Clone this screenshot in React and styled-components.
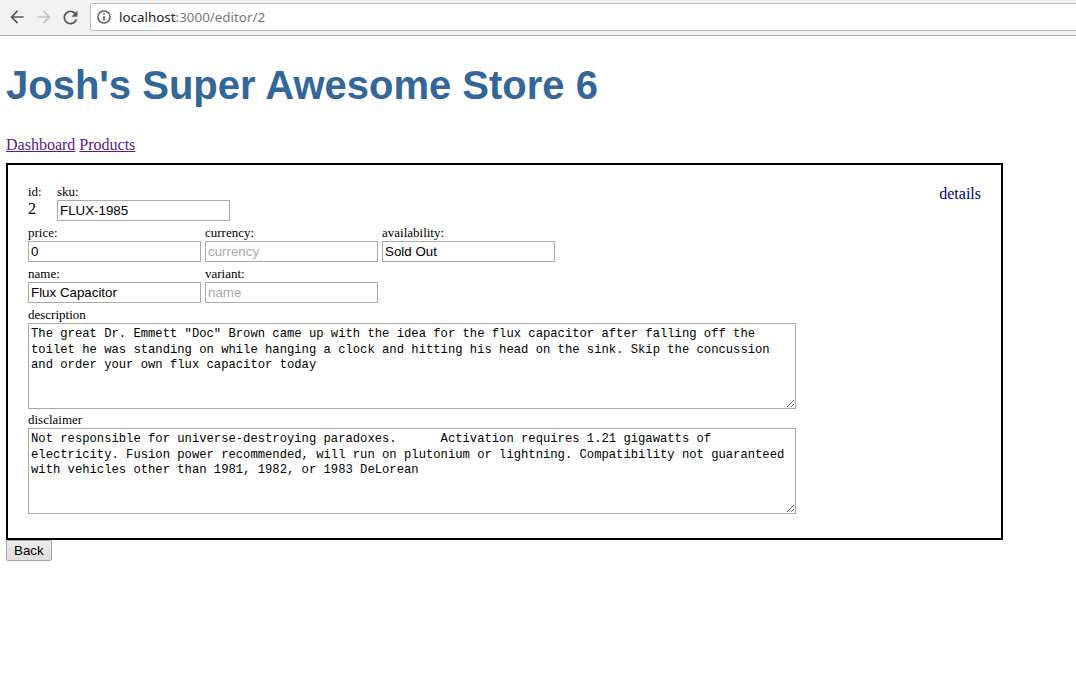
import React from "react";
import styled, { createGlobalStyle } from "styled-components";

const GlobalStyle = createGlobalStyle`
  html, body { margin: 0; padding: 0; background: #fff; }
  body { font-family: "Liberation Serif", "Times New Roman", serif; font-size: 16px; color: #000; }
`;

const Toolbar = styled.div`
  display: flex;
  align-items: flex-start;
  box-sizing: border-box;
  height: 36px;
  padding: 3px 0 0 3px;
  background: #f2f2f2;
  border-bottom: 1px solid #ababab;
  overflow: hidden;
`;

const NavButton = styled.div`
  width: 27px;
  height: 28px;
  display: flex;
  align-items: center;
  justify-content: center;
  color: ${(p) => (p.$disabled ? "#c4c4c4" : "#5a5a5a")};
`;

const AddressBar = styled.div`
  flex: 1;
  margin: 0 -10px 0 6px;
  height: 28px;
  box-sizing: border-box;
  border: 1px solid #bcbcbc;
  border-radius: 2px;
  background: #fff;
  display: flex;
  align-items: center;
  padding-left: 6px;
  gap: 8px;
`;

const Url = styled.span`
  font-family: "Noto Sans", "Open Sans", sans-serif;
  font-size: 13.4px;
  color: #777;
  white-space: nowrap;
`;

const Host = styled.span`
  color: #222;
`;

const Page = styled.div`
  padding: 0 6px;
`;

const Title = styled.h1`
  margin: 26px 0 28px;
  font-family: "Liberation Sans", Arial, sans-serif;
  font-weight: bold;
  font-size: 40px;
  line-height: 46px;
  color: #336699;
`;

const Nav = styled.nav`
  line-height: 18px;
  margin-bottom: 9px;
`;

const NavLink = styled.a`
  color: #551a8b;
  text-decoration: underline;
  cursor: pointer;
`;

const Box = styled.div`
  width: 997px;
  box-sizing: border-box;
  border: 2px solid #000;
  padding: 18px 20px 24px;
  display: flex;
  justify-content: space-between;
  align-items: flex-start;
`;

const Form = styled.div`
  display: flex;
  flex-direction: column;
`;

const Row = styled.div`
  display: flex;
  gap: 4px;
  margin-bottom: ${(p) => p.$gap ?? 3}px;
`;

const Field = styled.div`
  display: flex;
  flex-direction: column;
  width: ${(p) => p.$w || "auto"};
`;

const Label = styled.label`
  font-size: 13px;
  line-height: 17px;
  height: 17px;
`;

const IdValue = styled.span`
  font-size: 16px;
  line-height: 18px;
`;

const TextInput = styled.input`
  width: 173px;
  height: 21px;
  box-sizing: border-box;
  margin: 0;
  padding: 1px 2px;
  border: 1px solid #a9a9a9;
  font-family: "Liberation Sans", Arial, sans-serif;
  font-size: 13.333px;
  color: #000;
  outline: none;
  &::placeholder { color: #a9a9a9; }
`;

const TextArea = styled.textarea`
  display: block;
  width: 768px;
  height: 86px;
  box-sizing: border-box;
  margin: 0;
  padding: 3px 2px 2px;
  border: 1px solid #a9a9a9;
  font-family: "Liberation Mono", "DejaVu Sans Mono", monospace;
  font-size: 12.2px;
  line-height: 15.5px;
  color: #000;
  resize: both;
  outline: none;
`;

const Details = styled.span`
  margin-top: 2px;
  font-size: 16px;
  line-height: 18px;
  color: #000080;
`;

const BackButton = styled.button`
  display: block;
  margin: 0;
  height: 21px;
  padding: 1px 7px;
  font-family: "Liberation Sans", Arial, sans-serif;
  font-size: 13.333px;
  color: #000;
  border: 1px solid #a6a6a6;
  border-radius: 2px;
  background: linear-gradient(#ededed, #dedede);
`;

const ArrowBack = () => (
  <svg width="20" height="20" viewBox="0 0 24 24" fill="currentColor">
    <path d="M20 11H7.83l5.59-5.59L12 4l-8 8 8 8 1.41-1.41L7.83 13H20v-2z" />
  </svg>
);

const ArrowForward = () => (
  <svg width="20" height="20" viewBox="0 0 24 24" fill="currentColor">
    <path d="M12 4l-1.41 1.41L16.17 11H4v2h12.17l-5.58 5.59L12 20l8-8z" />
  </svg>
);

const Reload = () => (
  <svg width="21" height="21" viewBox="0 0 24 24" fill="currentColor">
    <path d="M17.65 6.35C16.2 4.9 14.21 4 12 4c-4.42 0-7.99 3.58-7.99 8s3.57 8 7.99 8c3.73 0 6.84-2.55 7.73-6h-2.08c-.82 2.33-3.04 4-5.650 4-3.31 0-6-2.69-6-6s2.69-6 6-6c1.66 0 3.14.69 4.22 1.78L13 11h7V4l-2.35 2.35z" />
  </svg>
);

const InfoIcon = () => (
  <svg width="14" height="14" viewBox="0 0 14 14">
    <circle cx="7" cy="7" r="6.1" fill="none" stroke="#5a5a5a" strokeWidth="1.5" />
    <rect x="6.25" y="6" width="1.5" height="4.5" fill="#5a5a5a" />
    <rect x="6.25" y="3.3" width="1.5" height="1.5" fill="#5a5a5a" />
  </svg>
);

const description =
  'The great Dr. Emmett "Doc" Brown came up with the idea for the flux capacitor after falling off the toilet he was standing on while hanging a clock and hitting his head on the sink. Skip the concussion and order your own flux capacitor today';

const disclaimer =
  "Not responsible for universe-destroying paradoxes.      Activation requires 1.21 gigawatts of electricity. Fusion power recommended, will run on plutonium or lightning. Compatibility not guaranteed with vehicles other than 1981, 1982, or 1983 DeLorean";

export default function App() {
  return (
    <>
      <GlobalStyle />
      <Toolbar>
        <NavButton><ArrowBack /></NavButton>
        <NavButton $disabled><ArrowForward /></NavButton>
        <NavButton><Reload /></NavButton>
        <AddressBar>
          <InfoIcon />
          <Url>
            <Host>localhost</Host>:3000/editor/2
          </Url>
        </AddressBar>
      </Toolbar>
      <Page>
        <Title>Josh's Super Awesome Store 6</Title>
        <Nav>
          <NavLink>Dashboard</NavLink> <NavLink>Products</NavLink>
        </Nav>
        <Box>
          <Form>
            <Row>
              <Field $w="25px">
                <Label>id:</Label>
                <IdValue>2</IdValue>
              </Field>
              <Field>
                <Label>sku:</Label>
                <TextInput defaultValue="FLUX-1985" />
              </Field>
            </Row>
            <Row>
              <Field>
                <Label>price:</Label>
                <TextInput defaultValue="0" />
              </Field>
              <Field>
                <Label>currency:</Label>
                <TextInput placeholder="currency" />
              </Field>
              <Field>
                <Label>availability:</Label>
                <TextInput defaultValue="Sold Out" />
              </Field>
            </Row>
            <Row>
              <Field>
                <Label>name:</Label>
                <TextInput defaultValue="Flux Capacitor" />
              </Field>
              <Field>
                <Label>variant:</Label>
                <TextInput placeholder="name" />
              </Field>
            </Row>
            <Row $gap={2}>
              <Field>
                <Label>description</Label>
                <TextArea defaultValue={description} />
              </Field>
            </Row>
            <Row $gap={0}>
              <Field>
                <Label>disclaimer</Label>
                <TextArea defaultValue={disclaimer} />
              </Field>
            </Row>
          </Form>
          <Details>details</Details>
        </Box>
        <BackButton>Back</BackButton>
      </Page>
    </>
  );
}
